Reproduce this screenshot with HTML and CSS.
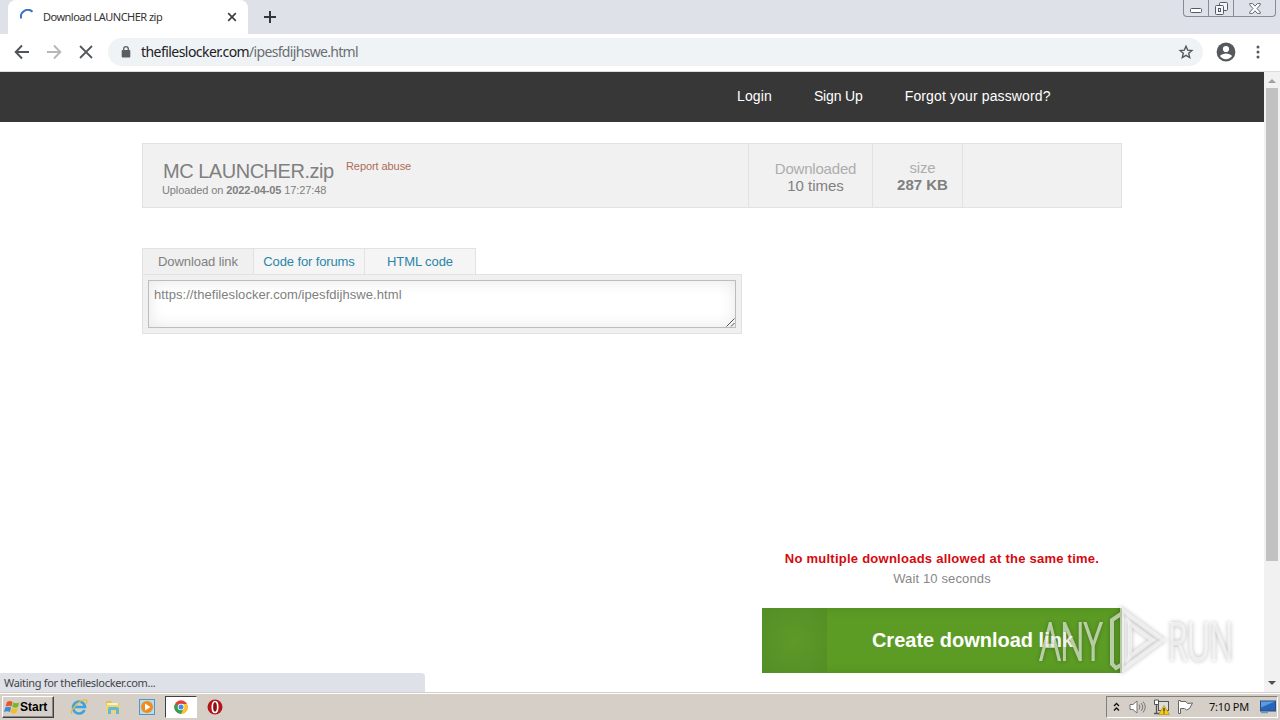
FILE: index.html
```html
<!DOCTYPE html>
<html lang="en">
<head>
  <meta charset="UTF-8">
  <title>Download LAUNCHER zip</title>
  <link rel="stylesheet" href="styles.css">
</head>
<body>
  <div class="tabstrip">
    <div class="tab">
      <svg class="spinner" width="16" height="16" viewBox="0 0 16 16"><path d="M1.200 9.500A6.800 6.800 0 0 1 12.500 2.800" fill="none" stroke="#3b73c8" stroke-width="2"/></svg>
      <span class="tab-title">Download LAUNCHER zip</span>
      <svg width="10" height="10" viewBox="0 0 10 10"><path d="M1.200 1.200l7.600 7.600M8.800 1.200l-7.600 7.600" stroke="#3c4043" stroke-width="1.700"/></svg>
    </div>
    <svg class="plus" width="12" height="12" viewBox="0 0 12 12"><path d="M6 0v12M0 6h12" stroke="#33373c" stroke-width="2"/></svg>
    <div class="win-buttons">
      <div class="win"><svg width="12" height="5" viewBox="0 0 12 5"><rect x=".5" y=".5" width="11" height="4" rx="1" fill="#fff" stroke="#545b66"/></svg></div>
      <div class="win"><svg width="13" height="13" viewBox="0 0 13 13"><g fill="#f4f5f8" stroke="#545b66"><rect x="4.500" y=".5" width="8" height="8" rx="1"/><rect x=".5" y="3.500" width="8" height="9" rx="1"/><rect x="3.500" y="6.500" width="2" height="3"/></g></svg></div>
      <div class="win wide"><svg width="12" height="11" viewBox="0 0 12 11"><path d="M.7.6h3L6 3.200 8.300.6h3v1.200L8 5.500l3.300 3.700v1.200h-3L6 7.800l-2.300 2.600h-3V9.200L4 5.500.7 1.800z" fill="#fff" stroke="#545b66" stroke-width=".9"/></svg></div>
    </div>
  </div>

  <div class="toolbar">
    <svg width="16" height="16" viewBox="0 0 16 16"><path d="M15 8H2M8 1.500L1.700 8 8 14.500" fill="none" stroke="#505357" stroke-width="1.900"/></svg>
    <svg width="16" height="16" viewBox="0 0 16 16"><path d="M1 8h13M8 1.500L14.300 8 8 14.500" fill="none" stroke="#b5b7b9" stroke-width="1.900"/></svg>
    <svg width="16" height="16" viewBox="0 0 16 16"><path d="M2 2l12 12M14 2L2 14" stroke="#55585c" stroke-width="1.800"/></svg>
    <div class="address">
      <svg width="10" height="12" viewBox="0 0 10 12"><rect x=".7" y="4" width="8.600" height="7.500" rx="1" fill="#5a5d61"/><path d="M2.700 4.500V3a2.300 2.300 0 0 1 4.600 0v1.500" fill="none" stroke="#5a5d61" stroke-width="1.300"/></svg>
      <span class="url"><span class="host">thefileslocker.com</span>/ipesfdijhswe.html</span>
      <svg width="16" height="16" viewBox="0 0 16 16"><path d="M8 2.200l1.700 3.900 4.200.4-3.200 2.800 1 4.200L8 11.300l-3.700 2.200 1-4.200-3.200-2.800 4.200-.4z" fill="none" stroke="#55585c" stroke-width="1.400"/></svg>
    </div>
    <svg class="avatar" width="20" height="20" viewBox="0 0 20 20"><circle cx="10" cy="10" r="9.400" fill="#55585d"/><circle cx="10" cy="7" r="3.100" fill="#fff"/><path d="M3.900 14.100c1.200-1.900 3.900-2.700 6.100-2.700s4.900.8 6.100 2.700A7.300 7.300 0 0 1 10 17.200a7.300 7.300 0 0 1-6.100-3.100z" fill="#fff"/></svg>
    <svg class="dots" width="4" height="14" viewBox="0 0 4 14"><g fill="#55585c"><circle cx="2" cy="2" r="1.500"/><circle cx="2" cy="7" r="1.500"/><circle cx="2" cy="12" r="1.500"/></g></svg>
  </div>

  <div class="viewport">
    <div class="page">
      <div class="nav">
        <a class="login">Login</a>
        <a class="signup">Sign Up</a>
        <a class="forgot">Forgot your password?</a>
      </div>

      <div class="file-info">
        <div class="file-main">
          <div class="file-top"><span class="file-name">MC LAUNCHER.zip</span><a class="report">Report abuse</a></div>
          <div class="uploaded">Uploaded on <b>2022-04-05</b> 17:27:48</div>
        </div>
        <div class="stat downloads"><span class="label">Downloaded</span><span>10 times</span></div>
        <div class="stat size"><span class="label">size</span><b>287 KB</b></div>
        <div class="stat rest"></div>
      </div>

      <div class="columns">
        <div class="share">
          <div class="share-tabs">
            <div class="share-tab active">Download link</div>
            <div class="share-tab forums">Code for forums</div>
            <div class="share-tab">HTML code</div>
          </div>
          <div class="share-box">
            <div class="link-area">
              <span>https://thefileslocker.com/ipesfdijhswe.html</span>
              <svg width="9" height="9" viewBox="0 0 9 9"><path d="M.5 8.500l8-8M5 8.500L8.500 5" stroke="#555" stroke-width="1"/></svg>
            </div>
          </div>
        </div>
        <div class="download">
          <div class="error">No multiple downloads allowed at the same time.</div>
          <div class="wait">Wait 10 seconds</div>
          <div class="create"><div class="create-icon"></div><div class="create-text">Create download link</div></div>
        </div>
      </div>
    </div>

    <div class="scrollbar">
      <svg width="8" height="4" viewBox="0 0 8 4"><path d="M0 4l4-4 4 4z" fill="#a0a0a0"/></svg>
      <div class="thumb"></div>
      <svg width="8" height="4" viewBox="0 0 8 4"><path d="M0 0l4 4 4-4z" fill="#505050"/></svg>
    </div>

    <div class="status">Waiting for thefileslocker.com...</div>

    <svg class="watermark" width="204" height="84" viewBox="0 0 204 84">
      <g class="mark">
        <text x="4" y="62" textLength="62" lengthAdjust="spacingAndGlyphs">ANY</text>
        <text x="132" y="62" textLength="65" lengthAdjust="spacingAndGlyphs">RUN</text>
        <path d="M85 16l-9 6v44l4 4 5-3M86 12v60l41-30zM94 26v32l22-16z"/>
      </g>
    </svg>
  </div>

  <div class="taskbar">
    <div class="start">
      <svg width="16" height="16" viewBox="0 0 16 16"><path d="M3 3q3-2 5.500 0L7.500 7.500Q5 6 1.500 7.500z" fill="#e8552b"/><path d="M9.200 3.400q3 1.600 6 0L14 8q-3 1.600-5.800 0z" fill="#76b82d"/><path d="M1.300 8.500q3-1.600 5.800 0L6 13q-2.700-1.700-6 0z" fill="#3b8bd9"/><path d="M7.900 8.900q3 1.700 5.900.2L12.500 13.800q-3 1.500-5.800-.4z" fill="#f5bd25"/></svg>
      <span>Start</span>
    </div>
    <div class="launch">
      <svg width="18" height="18" viewBox="0 0 18 18"><path d="M14.500 12A6 6 0 1 1 15 9H4.500" fill="none" stroke="#3ba4dd" stroke-width="2.600"/><path d="M2 16C-1 13 10 1 16 2c1.500.3 1 2.500 0 4" fill="none" stroke="#e8bc3e" stroke-width="1.300"/></svg>
    </div>
    <div class="launch">
      <svg width="18" height="18" viewBox="0 0 18 18"><path d="M2 3h5l1 2h7v10H2z" fill="#e3bf55"/><path d="M3 5h11v6H3z" fill="#fbf1bd"/><path d="M2 7h14v8H2z" fill="#f0d474"/><path d="M4 16v-5q0-2 2-2h7q2 0 2 2v5h-3v-4H7v4z" fill="#62b9d5"/></svg>
    </div>
    <div class="launch">
      <svg width="18" height="18" viewBox="0 0 18 18"><rect x="1.500" y="1.500" width="15" height="15" fill="#b5dcf0" stroke="#5696bd"/><circle cx="9" cy="9" r="6" fill="#f28a1c"/><path d="M7 5.500v7L12.500 9z" fill="#fff"/></svg>
    </div>
    <div class="launch pressed">
      <svg width="14" height="14" viewBox="0 0 14 14"><circle cx="7" cy="7" r="6.700" fill="#e04336"/><path d="M7 7L1.200 3.650A6.700 6.700 0 0 0 7 13.700L10 8.700z" fill="#35a050"/><path d="M7 4h5.900A6.700 6.700 0 0 1 7 13.700L9.800 8.600z" fill="#fbc91b"/><circle cx="7" cy="7" r="3.300" fill="#fff"/><circle cx="7" cy="7" r="2.500" fill="#4688ee"/></svg>
    </div>
    <div class="launch">
      <svg width="16" height="16" viewBox="0 0 16 16"><circle cx="8" cy="8" r="7.500" fill="#b3151a"/><ellipse cx="8" cy="8" rx="2.700" ry="5.500" fill="#8d0d12" stroke="#fff" stroke-width="1.700"/></svg>
    </div>
    <div class="tray">
      <svg class="chevrons" width="7" height="10" viewBox="0 0 7 10"><path d="M1 4l2.500-2.500L6 4M1 8.500L3.500 6 6 8.500" fill="none" stroke="#111" stroke-width="1.300"/></svg>
      <svg class="speaker" width="17" height="16" viewBox="0 0 17 16"><path d="M1 5.500h3L8 2v12l-4-3.500H1z" fill="#fff" stroke="#777"/><path d="M10 5.500q2 2.500 0 5M12 4q3.500 4 0 8M14 2.500q4.500 5.500 0 11" fill="none" stroke="#777"/></svg>
      <svg class="network" width="17" height="16" viewBox="0 0 17 16"><rect x="5.500" y="2.500" width="10" height="9" fill="#ddd" stroke="#555"/><path d="M1.500 1h4v4.500h-4z" fill="#fff" stroke="#555"/><path d="M3.500 5.500V15M1 14.500h6" fill="none" stroke="#555" stroke-width="1.300"/><path d="M11 6.500l5.500 9h-11z" fill="#f5cc17" stroke="#b48d13" stroke-width=".7"/><path d="M11 9v3.500M11 13.500v1" stroke="#222" stroke-width="1.200"/></svg>
      <svg class="flag" width="17" height="16" viewBox="0 0 17 16"><path d="M1.500 1.500v13h2v-5h4l2 1.500 3-1.500 3-5.500-5 .5-1.500-2h-5.500v-1z" fill="#fff" stroke="#666"/></svg>
      <span class="clock">7:10 PM</span>
      <svg width="16" height="14" viewBox="0 0 16 14"><rect x=".5" y="1" width="15" height="10" fill="#2865b8" stroke="#274d82"/><path d="M1 1.500h14L1 7.500z" fill="#5b9ae0"/><path d="M1 12.500h7" stroke="#7195bc" stroke-width="1.500"/></svg>
    </div>
  </div>
</body>
</html>
```
FILE: styles.css
```css
* {
  box-sizing: border-box;
}
body {
  margin: 0;
  width: 1280px;
  height: 720px;
  overflow: hidden;
  display: flex;
  flex-direction: column;
  background: #fff;
  font-family: "Liberation Sans", Arial, sans-serif;
}
svg {
  display: block;
  flex: none;
}

/* browser frame */
.tabstrip {
  height: 34px;
  flex: none;
  display: flex;
  align-items: center;
  background: #dee1e8;
  padding-left: 8px;
}
.tab {
  width: 240px;
  height: 34px;
  display: flex;
  align-items: center;
  background: #fff;
  border-radius: 8px 8px 0 0;
  padding: 0 11px 0 12px;
}
.tab-title {
  flex: 1;
  margin-left: 7px;
  padding-bottom: 1px;
  font: 11px "Noto Sans", sans-serif;
  letter-spacing: -0.52px;
  color: #333;
}
.plus {
  margin-left: 16px;
}
.win-buttons {
  display: flex;
  align-self: flex-start;
  height: 17px;
  margin-left: auto;
  margin-right: 4px;
  border: 1px solid #858b98;
  border-top: 0;
  border-radius: 0 0 4px 4px;
}
.win {
  width: 25px;
  display: flex;
  align-items: center;
  justify-content: center;
  border-right: 1px solid #858b98;
}
.win:first-child {
  padding-top: 5px;
}
.wide {
  width: 41px;
  border-right: 0;
}
.toolbar {
  height: 38px;
  flex: none;
  display: flex;
  align-items: center;
  gap: 16px;
  padding: 0 20px 1px 14px;
  border-bottom: 1px solid #dcdcdc;
}
.address {
  width: 1095px;
  height: 28px;
  margin-left: -2px;
  display: flex;
  align-items: center;
  padding: 0 9px 0 13px;
  border-radius: 14px;
  background: #f0f3f5;
}
.url {
  flex: 1;
  margin-left: 10px;
  padding-bottom: 1px;
  font: 14px "Noto Sans", sans-serif;
  letter-spacing: -0.68px;
  color: #6a6e73;
}
.host {
  color: #202124;
  letter-spacing: -0.55px;
}
.avatar {
  margin-left: -3px;
}
.dots {
  margin-left: 4px;
}

/* page */
.viewport {
  position: relative;
  height: 620px;
  flex: none;
  display: flex;
}
.page {
  width: 1264px;
}
.nav {
  height: 50px;
  display: flex;
  gap: 42px;
  padding-left: 737px;
  background: #373737;
  color: #fff;
  font-size: 14px;
  line-height: 49px;
}
.login,
.forgot {
  letter-spacing: 0.13px;
}
.signup {
  letter-spacing: -0.14px;
}
.file-info {
  width: 980px;
  height: 65px;
  margin: 21px auto 0;
  display: flex;
  background: #f1f1f1;
  border: 1px solid #e2e2e2;
  color: #808080;
}
.file-main {
  width: 605px;
  padding: 15px 0 0 19px;
}
.file-top {
  display: flex;
  height: 24px;
}
.file-name {
  margin-left: 1px;
  width: 183px;
  font-size: 20px;
  line-height: 24px;
  letter-spacing: -0.48px;
}
.report {
  font-size: 11px;
  line-height: 15px;
  letter-spacing: -0.08px;
  color: #ac6c58;
}
.uploaded {
  font-size: 11px;
  line-height: 14px;
  letter-spacing: -0.11px;
}
.stat {
  display: flex;
  flex-direction: column;
  align-items: center;
  padding-top: 16px;
  border-left: 1px solid #e2e2e2;
  font-size: 15px;
  line-height: 17px;
}
.label {
  color: #adadad;
  letter-spacing: -0.2px;
}
.downloads {
  width: 124px;
  padding-left: 10px;
}
.size {
  width: 90px;
  padding-top: 15px;
  padding-left: 10px;
}
.rest {
  flex: 1;
}
.columns {
  width: 980px;
  margin: 40px auto 0;
  display: grid;
  grid-template-columns: 600px 360px;
  gap: 20px;
}
.share-tabs {
  display: flex;
  width: 334px;
  height: 26px;
  border: 1px solid #e2e2e2;
  border-bottom: 0;
  background: #f5f5f5;
}
.share-tab {
  flex: 1;
  text-align: center;
  font-size: 13px;
  line-height: 26px;
  letter-spacing: -0.08px;
  color: #2a86a8;
  border-left: 1px solid #e2e2e2;
}
.share-tab.active {
  border-left: 0;
  background: #f0f0f0;
  color: #808080;
}
.share-tab.forums {
  letter-spacing: -0.13px;
}
.share-box {
  height: 60px;
  padding: 5px;
  background: #f0f0f0;
  border: 1px solid #e2e2e2;
}
.link-area {
  height: 48px;
  display: flex;
  justify-content: space-between;
  padding: 6px 0 0 5px;
  border: 1px solid #bdbdbd;
  background: #fff;
  box-shadow: inset 0 0 16px #e6e6e6;
  font-size: 13px;
  line-height: 16px;
  letter-spacing: 0.06px;
  color: #808080;
}
.link-area svg {
  align-self: flex-end;
}
.download {
  padding-top: 301px;
  text-align: center;
  font-size: 13px;
  line-height: 20px;
}
.error {
  color: #d40a0f;
  font-weight: bold;
  letter-spacing: 0.25px;
}
.wait {
  color: #888;
  letter-spacing: 0.13px;
}
.create {
  height: 65px;
  margin-top: 19px;
  display: flex;
  background: #5c9c25;
  box-shadow: inset 0 0 8px #4e8920;
}
.create-icon {
  width: 65px;
  background: radial-gradient(#5e9929, #528e25);
}
.create-text {
  flex: 1;
  color: #fff;
  font-size: 20px;
  font-weight: bold;
  line-height: 64px;
  padding-right: 4px;
}
.scrollbar {
  width: 16px;
  display: flex;
  flex-direction: column;
  align-items: center;
  background: #f1f1f1;
  padding: 7px 0;
}
.thumb {
  width: 12px;
  height: 473px;
  margin: 5px 0 auto;
  background: #c1c1c1;
}
.status {
  position: absolute;
  left: 0;
  bottom: 0;
  width: 425px;
  height: 19px;
  padding-left: 4px;
  border-radius: 0 4px 0 0;
  background: #dee1e8;
  color: #444;
  font: 11px/19px "Noto Sans", sans-serif;
  letter-spacing: -0.31px;
}
.watermark {
  position: absolute;
  left: 1036px;
  top: 526px;
  overflow: visible;
  filter: drop-shadow(0 0 2px rgba(0, 0, 0, 0.45));
}
.mark {
  opacity: 0.6;
}
.mark text {
  font: 300 51px "Open Sans", sans-serif;
  fill: #fff;
  stroke: #fff;
  stroke-width: 2;
}
.mark path {
  fill: none;
  stroke: #fff;
  stroke-width: 4;
}

/* taskbar */
.taskbar {
  height: 28px;
  display: flex;
  align-items: center;
  background: #d5cfc7;
  border-top: 1px solid #d5cfc7;
  box-shadow: inset 0 1px #fff;
  padding: 0 0 0 2px;
}
.start {
  width: 52px;
  height: 22px;
  margin-right: 9px;
  display: flex;
  align-items: center;
  padding-left: 1px;
  border: 1px solid;
  border-color: #fff #404040 #404040 #fff;
  box-shadow: inset -1px -1px #888;
  font-size: 12px;
  font-weight: bold;
}
.launch {
  width: 32px;
  height: 22px;
  margin-right: 2px;
  display: flex;
  align-items: center;
  justify-content: center;
}
.pressed {
  background: #fff;
  border: 1px solid;
  border-color: #404040 #fff #fff #404040;
}
.tray {
  width: 172px;
  height: 22px;
  margin: 0 2px 0 auto;
  display: flex;
  align-items: center;
  padding-left: 6px;
  border: 1px solid;
  border-color: #808080 #fff #fff #808080;
}
.speaker {
  margin-left: 9px;
}
.network,
.flag {
  margin-left: 7px;
}
.clock {
  width: 51px;
  margin-left: 15px;
  font: 11px "Noto Sans", sans-serif;
  letter-spacing: -0.2px;
  color: #111;
}
```
